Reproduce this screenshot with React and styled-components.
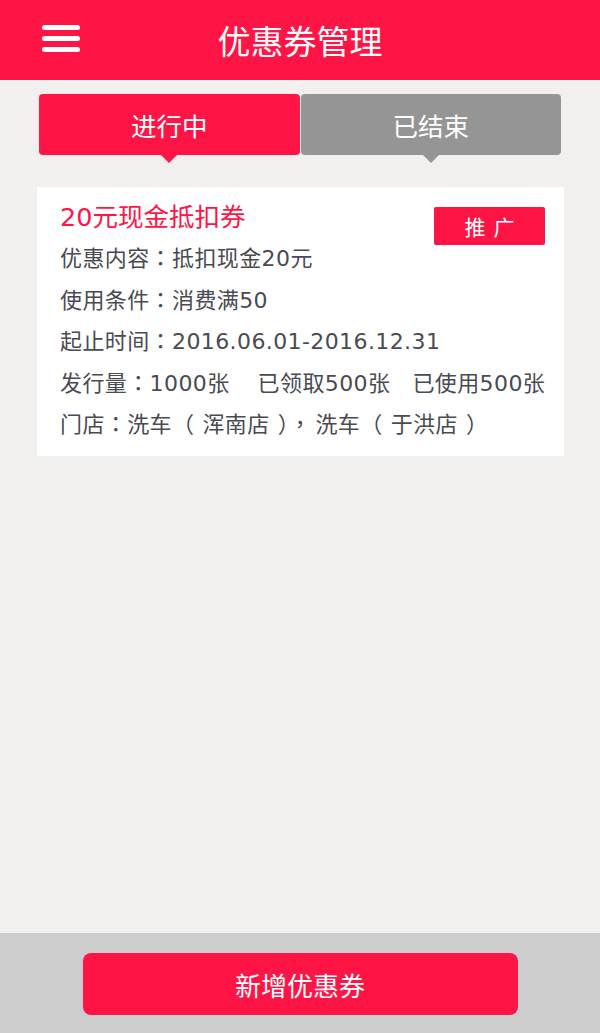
import React from "react";
import styled, { createGlobalStyle } from "styled-components";

const RED = "#ff1446";

const GlobalStyle = createGlobalStyle`
  html, body {
    margin: 0;
    padding: 0;
    background: #f1f0ef;
    font-family: "DejaVu Sans", "Noto Sans CJK SC", sans-serif;
  }
`;

const Page = styled.div`
  width: 600px;
  height: 1033px;
  display: flex;
  flex-direction: column;
  background: #f1f0ef;
`;

const Header = styled.header`
  height: 80px;
  background: ${RED};
  display: flex;
  align-items: center;
  justify-content: center;
  position: relative;
  color: #fff;
  font-size: 33px;
`;

const Menu = styled.div`
  position: absolute;
  left: 42px;
  top: 25px;
  width: 38px;
  display: flex;
  flex-direction: column;
  gap: 6px;
  span {
    display: block;
    height: 5px;
    border-radius: 3px;
    background: #fff;
  }
`;

const Main = styled.main`
  flex: 1;
  padding: 14px 36px 0 37px;
`;

const Tabs = styled.div`
  display: flex;
  gap: 1px;
  margin-left: 2px;
  margin-right: 3px;
`;

const Tab = styled.div`
  flex: 1;
  height: 61px;
  border-radius: 4px;
  background: ${(p) => (p.$active ? RED : "#959595")};
  color: #fff;
  font-size: 25.5px;
  display: flex;
  align-items: center;
  justify-content: center;
  position: relative;
  &::after {
    content: "";
    position: absolute;
    left: 50%;
    bottom: -8px;
    margin-left: -9px;
    border-left: 9px solid transparent;
    border-right: 9px solid transparent;
    border-top: 9px solid ${(p) => (p.$active ? RED : "#959595")};
  }
`;

const Card = styled.div`
  margin-top: 32px;
  background: #fff;
  padding: 10px 19px 10px 23px;
  color: #4a4a53;
  font-size: 22px;
`;

const TitleRow = styled.div`
  display: flex;
  justify-content: space-between;
  align-items: flex-start;
  height: 41px;
`;

const Title = styled.div`
  color: ${RED};
  font-size: 25.5px;
  line-height: 41px;
`;

const Promote = styled.div`
  margin-top: 10px;
  width: 111px;
  height: 38px;
  border-radius: 2px;
  background: ${RED};
  color: #fff;
  font-size: 21px;
  letter-spacing: 8px;
  padding-left: 8px;
  box-sizing: border-box;
  display: flex;
  align-items: center;
  justify-content: center;
`;

const Row = styled.div`
  height: 41.5px;
  line-height: 41.5px;
  white-space: nowrap;
  letter-spacing: 0.4px;
`;

const Punct = styled.span`
  font-family: "Noto Sans CJK TC", "Noto Sans CJK SC", sans-serif;
  line-height: 0;
  margin-left: ${(p) => p.$ml || 0}px;
  margin-right: ${(p) => p.$mr || 0}px;
`;

const Item = styled.span`
  margin-left: ${(p) => p.$gap || 0}px;
`;

const Footer = styled.footer`
  height: 100px;
  background: #cdcdcd;
  display: flex;
  justify-content: center;
  padding-top: 20px;
  box-sizing: border-box;
`;

const AddButton = styled.div`
  width: 435px;
  height: 62px;
  border-radius: 8px;
  background: ${RED};
  color: #fff;
  font-size: 26px;
  display: flex;
  align-items: center;
  justify-content: center;
`;

export default function App() {
  return (
    <Page>
      <GlobalStyle />
      <Header>
        <Menu>
          <span />
          <span />
          <span />
        </Menu>
        优惠券管理
      </Header>
      <Main>
        <Tabs>
          <Tab $active>进行中</Tab>
          <Tab>已结束</Tab>
        </Tabs>
        <Card>
          <TitleRow>
            <Title>20元现金抵扣券</Title>
            <Promote>推广</Promote>
          </TitleRow>
          <Row>
            优惠内容<Punct>：</Punct>抵扣现金20元
          </Row>
          <Row>
            使用条件<Punct>：</Punct>消费满50
          </Row>
          <Row>
            起止时间<Punct>：</Punct>2016.06.01-2016.12.31
          </Row>
          <Row>
            发行量<Punct>：</Punct>1000张
            <Item $gap={28}>已领取500张</Item>
            <Item $gap={22}>已使用500张</Item>
          </Row>
          <Row>
            门店<Punct>：</Punct>洗车<Punct $mr={8}>（</Punct>浑南店<Punct $ml={8}>）</Punct>
            <Punct $mr={4}>，</Punct>洗车<Punct $mr={8}>（</Punct>于洪店<Punct $ml={8}>）</Punct>
          </Row>
        </Card>
      </Main>
      <Footer>
        <AddButton>新增优惠券</AddButton>
      </Footer>
    </Page>
  );
}
